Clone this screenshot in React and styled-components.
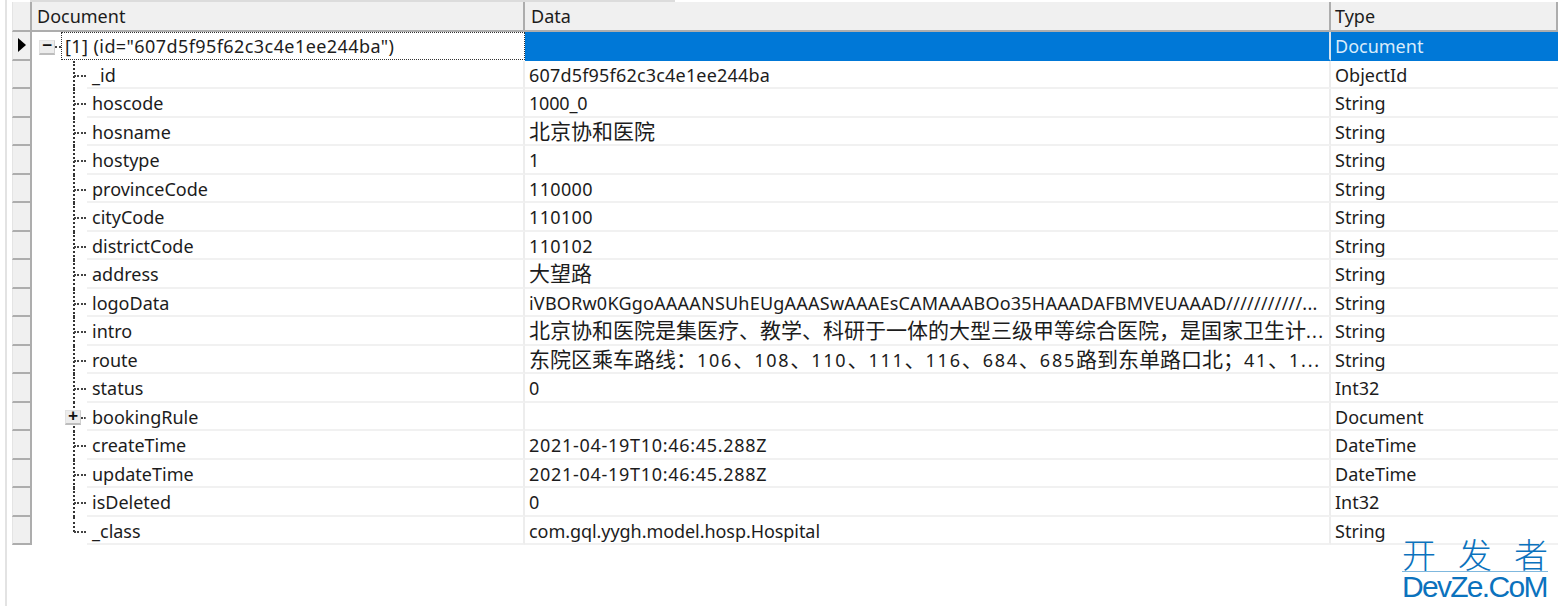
import React from "react";
import styled, { createGlobalStyle } from "styled-components";

const Global = createGlobalStyle`
  html, body { margin: 0; padding: 0; background: #fff; }
  body { font-family: "Noto Sans", "Noto Sans CJK SC", sans-serif; }
`;

const Page = styled.div`
  width: 1558px;
  height: 606px;
  overflow: hidden;
  position: relative;
  background: #fff;
  padding: 0 0 0 5px;
  box-sizing: border-box;
`;

const Frame = styled.div`
  height: 100%;
  border-left: 2px solid #e3e3e3;
  padding: 2px 0 0 5px;
  box-sizing: border-box;
`;

const Grid = styled.div`
  display: flex;
  flex-direction: column;
  width: 1546px;
`;

const Line = styled.div`
  display: flex;
  height: ${(p) => p.$h}px;
  flex: none;
`;

const RowHead = styled.div`
  width: 20px;
  flex: none;
  box-sizing: border-box;
  background: #f0f0f0;
  border-right: 2px solid #adadad;
  border-bottom: 2px solid #adadad;
  border-left: 1px solid #e4e4e4;
  display: flex;
  align-items: center;
  justify-content: center;
`;

const Arrow = styled.span`
  width: 0;
  height: 0;
  border-left: 8px solid #000;
  border-top: 7px solid transparent;
  border-bottom: 7px solid transparent;
`;

const HeadCell = styled.div`
  width: ${(p) => p.$w}px;
  flex: ${(p) => (p.$grow ? 1 : "none")};
  box-sizing: border-box;
  background: #f0f0f0;
  border-right: 2px solid #adadad;
  border-bottom: 2px solid #adadad;
  padding-left: ${(p) => p.$pad}px;
  font-size: 18px;
  color: #1c1c1c;
  line-height: 28px;
`;

const Tree = styled.div`
  width: 493px;
  flex: none;
  display: flex;
  box-sizing: border-box;
  position: relative;
`;

const Gutter = styled.div`
  width: ${(p) => p.$w}px;
  flex: none;
  position: relative;
`;

const VLine = styled.i`
  position: absolute;
  left: 41px;
  top: ${(p) => p.$top}px;
  bottom: ${(p) => p.$bottom}px;
  border-left: 2px dotted #333;
`;

const HLine = styled.i`
  position: absolute;
  left: ${(p) => p.$left}px;
  width: ${(p) => p.$w}px;
  top: 14px;
  border-top: 2px dotted #444;
`;

const Toggle = styled.span`
  position: absolute;
  left: ${(p) => p.$left}px;
  top: ${(p) => p.$top}px;
  width: 16px;
  height: 15px;
  box-sizing: border-box;
  background: #ececec;
  border: 1px solid #e2e2e2;
  border-bottom: 2px solid #bdbdbd;
  border-right-color: #cfcfcf;
  font: 700 17px/11px "Liberation Mono", monospace;
  color: #111;
  text-align: center;
`;

const NameCell = styled.div`
  flex: 1;
  min-width: 0;
  box-sizing: border-box;
  border-bottom: 2px solid #f1f1f1;
  border-right: 2px solid #ededed;
  padding-left: 5px;
  font-size: 18px;
  color: #1c1c1c;
  line-height: 28px;
  white-space: nowrap;
`;

const RootName = styled.div`
  flex: 1;
  min-width: 0;
  box-sizing: border-box;
  border: 1px dotted #333;
  margin-bottom: 1px;
  padding-left: 3px;
  font-size: 18px;
  letter-spacing: 0.42px;
  color: #1c1c1c;
  line-height: 26px;
  white-space: nowrap;
`;

const Cell = styled.div`
  flex: ${(p) => (p.$grow ? 1 : "none")};
  width: ${(p) => p.$w}px;
  box-sizing: border-box;
  padding-left: 4px;
  font-size: 18px;
  letter-spacing: ${(p) => p.$track || 0}px;
  line-height: 28px;
  white-space: nowrap;
  overflow: hidden;
  background: ${(p) => (p.$sel ? "#0078d7" : "#fff")};
  color: ${(p) => (p.$sel ? "#d9ecfb" : "#1c1c1c")};
  border-bottom: 2px solid ${(p) => (p.$sel ? "#0078d7" : "#f1f1f1")};
  border-right: 2px solid ${(p) => (p.$sel ? "#d5e3ef" : "#ededed")};
  ${(p) => p.$grow && "border-right: none;"}
`;

const Han = styled.span`
  font-size: 21px;
  letter-spacing: 0;
  line-height: 1;
`;

const Mark = styled.div`
  position: absolute;
  left: 1402px;
  top: 539px;
  width: 146px;
  color: #0b72bd;
`;

const MarkCn = styled.div`
  font-size: 34px;
  font-weight: 300;
  line-height: 32px;
  height: 32px;
  text-align: justify;
  text-align-last: justify;
  border-bottom: 1px solid #7fb8de;
`;

const MarkEn = styled.div`
  font: 400 30px/30px "Liberation Sans", sans-serif;
  letter-spacing: -1.7px;
  white-space: nowrap;
`;

const TopEdge = styled.div`
  position: absolute;
  left: 30px;
  top: 0;
  width: 645px;
  height: 2px;
  background: #dcdcdc;
`;

const Mixed = ({ text }) =>
  text.split(/([\u3000-\u303f\u4e00-\u9fff\uff00-\uffef]+)/).map((part, i) =>
    i % 2 ? <Han key={i}>{part}</Han> : part
  );

const rows = [
  ["_id", "607d5f95f62c3c4e1ee244ba", "ObjectId", 0.19],
  ["hoscode", "1000_0", "String", -0.2],
  ["hosname", "北京协和医院", "String"],
  ["hostype", "1", "String"],
  ["provinceCode", "110000", "String", 0.35],
  ["cityCode", "110100", "String", 0.35],
  ["districtCode", "110102", "String", 0.35],
  ["address", "大望路", "String"],
  ["logoData", "iVBORw0KGgoAAAANSUhEUgAAASwAAAEsCAMAAABOo35HAAADAFBMVEUAAAD///////////...", "String", 0.22],
  ["intro", "北京协和医院是集医疗、教学、科研于一体的大型三级甲等综合医院，是国家卫生计...", "String", 1.3],
  ["route", "东院区乘车路线：106、108、110、111、116、684、685路到东单路口北；41、1...", "String", 1.75],
  ["status", "0", "Int32"],
  ["bookingRule", "", "Document", 0, true],
  ["createTime", "2021-04-19T10:46:45.288Z", "DateTime", 0.7],
  ["updateTime", "2021-04-19T10:46:45.288Z", "DateTime", 0.7],
  ["isDeleted", "0", "Int32"],
  ["_class", "com.gql.yygh.model.hosp.Hospital", "String", -0.06],
];

export default function App() {
  return (
    <Page>
      <Global />
      <TopEdge />
      <Frame>
        <Grid>
          <Line $h={30}>
            <RowHead />
            <HeadCell $w={493} $pad={5}>Document</HeadCell>
            <HeadCell $w={806} $pad={6}>Data</HeadCell>
            <HeadCell $grow $pad={4}>Type</HeadCell>
          </Line>
          <Line $h={28.5}>
            <RowHead><Arrow /></RowHead>
            <Tree>
              <Gutter $w={29}>
                <Toggle $left={7} $top={8}>−</Toggle>
                <HLine $left={23} $w={6} />
              </Gutter>
              <RootName>[1] (id="607d5f95f62c3c4e1ee244ba")</RootName>
            </Tree>
            <Cell $w={806} $sel />
            <Cell $grow $sel>Document</Cell>
          </Line>
          {rows.map(([name, data, type, track, expand], i) => (
            <Line $h={28.5} key={name}>
              <RowHead />
              <Tree>
                <Gutter $w={55}>
                  {expand ? (
                    <>
                      <VLine $top={-1} $bottom={23} />
                      <VLine $top={23} $bottom={-1} />
                      <Toggle $left={33} $top={7}>+</Toggle>
                      <HLine $left={49} $w={5} />
                    </>
                  ) : (
                    <>
                      <VLine $top={0} $bottom={i === rows.length - 1 ? 13 : 0} />
                      <HLine $left={42} $w={12} />
                    </>
                  )}
                </Gutter>
                <NameCell>{name}</NameCell>
              </Tree>
              <Cell $w={806} $track={track}><Mixed text={data} /></Cell>
              <Cell $grow>{type}</Cell>
            </Line>
          ))}
        </Grid>
      </Frame>
      <Mark>
        <MarkCn>开发者</MarkCn>
        <MarkEn>DevZe.CoM</MarkEn>
      </Mark>
    </Page>
  );
}
